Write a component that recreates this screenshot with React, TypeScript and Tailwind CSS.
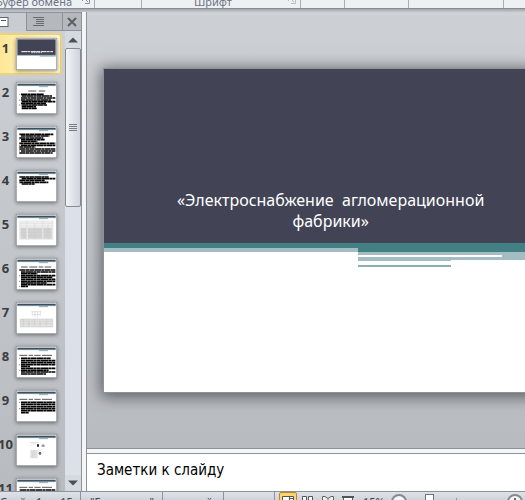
type Line = [x1: number, x2: number, y: number];

interface Slide {
  id: number;
  kind?: "title" | "table" | "diagram" | "photos";
  heading?: Line[];
  lines?: Line[];
}

const HEADING: Line[] = [
  [10, 34, 28],
  [38, 51, 28],
  [55, 74, 28],
  [78, 108, 28],
];

const SLIDES: Slide[] = [
  { id: 1, kind: "title" },
  {
    id: 2,
    heading: [[37, 61, 27], [68, 88, 27]],
    lines: [
      [15, 84, 37], [17, 108, 42], [15, 118, 48], [15, 105, 54],
      [17, 118, 59], [15, 90, 64], [17, 94, 69], [17, 60, 74], [17, 62, 79],
    ],
  },
  {
    id: 3,
    lines: [
      [10, 112, 25], [15, 100, 30], [10, 82, 36], [15, 86, 41], [15, 64, 46],
      [10, 118, 52], [15, 118, 58], [10, 58, 63], [10, 118, 69], [15, 118, 75], [10, 110, 81],
    ],
  },
  {
    id: 4,
    lines: [[10, 98, 21], [17, 118, 26], [10, 86, 31], [10, 97, 37], [17, 56, 42]],
  },
  { id: 5, kind: "table" },
  {
    id: 6,
    heading: [[15, 35, 27], [40, 64, 27], [68, 82, 27], [86, 106, 27]],
    lines: [
      [10, 118, 36], [15, 118, 42], [15, 64, 47], [15, 118, 53], [15, 110, 58],
      [15, 118, 64], [15, 118, 70], [15, 92, 75], [15, 118, 80], [15, 36, 85],
    ],
  },
  { id: 7, kind: "diagram" },
  {
    id: 8,
    heading: HEADING,
    lines: [
      [15, 104, 37], [15, 118, 44], [15, 118, 50], [15, 118, 56], [15, 42, 61],
      [15, 118, 67], [15, 98, 73], [15, 118, 78], [15, 90, 84],
    ],
  },
  {
    id: 9,
    heading: HEADING,
    lines: [
      [15, 118, 37], [15, 118, 43], [15, 118, 50], [15, 118, 56], [15, 118, 62], [15, 38, 68],
    ],
  },
  { id: 10, kind: "photos" },
  { id: 11, heading: HEADING, lines: [[12, 118, 36], [15, 118, 42]] },
];

function SlideArt({ slide }: { slide: Slide }) {
  return (
    <svg viewBox="0 0 123 96" className="block h-8 w-[41px]" aria-hidden="true">
      <rect x="1" y="1" width="121" height="94" fill="#fff" stroke="#8b8f94" strokeWidth="2" />
      {slide.kind === "title" ? (
        <>
          <rect x="4" y="4" width="115" height="48" fill="#424456" />
          <path d="M16 41H111" stroke="#fff" strokeWidth="3" strokeDasharray="17 1 9 2" />
          <path d="M46 44H78" stroke="#fff" strokeWidth="2" strokeDasharray="5 2" />
          <path d="M4 52H119" stroke="#a3bdc2" strokeWidth="2" />
          <path d="M71 54H119" stroke="#8199a5" strokeWidth="3" />
        </>
      ) : (
        <>
          <rect x="4" y="5" width="115" height="6" fill="#3d4e5d" />
          <path d="M4 11H119" stroke="#739099" strokeWidth="2" />
          <path d="M69 14H96" stroke="#8faeb4" strokeWidth="3" />
        </>
      )}
      {slide.heading?.map(([x1, x2, y]) => (
        <path key={x1} d={`M${x1} ${y}H${x2}`} stroke="#000" strokeWidth="2" />
      ))}
      {slide.lines?.map(([x1, x2, y], i) => (
        <g key={y}>
          <path
            d={`M${x1} ${y}H${x2}`}
            stroke="#000"
            strokeWidth="5"
            strokeDasharray={i % 2 ? "13 1 22 1 8 1" : "19 1 9 1 16 1"}
          />
          {i % 3 === 0 && <circle cx="11" cy={y} r="2" fill="#b87a4b" />}
        </g>
      ))}
      {slide.kind === "table" && (
        <g stroke="#c8c8c8" strokeWidth="1">
          <path d="M11 21H111V76H11Z" fill="#f1f1f1" />
          <path d="M14 41H31V74H14ZM36 41H78V74H36ZM82 41H107V74H82Z" fill="#d2d2d2" stroke="none" />
          <path d="M11 28H111M11 36H111M11 46H111M11 55H111M11 65H111M33 21V76M56 28V76M80 21V76M96 28V76" />
        </g>
      )}
      {slide.kind === "diagram" && (
        <g stroke="#aaa" strokeWidth="1" fill="none">
          <path d="M46 29H75M49 29V43M57 29V47M65 29V47M73 29V43M51 38H72" />
          <path d="M13 51H110V75H13Z" fill="#e3e3e3" />
          <path d="M13 58H110M13 65H110M22 51V75M38 58V75M55 51V75M72 58V75M91 51V75" strokeDasharray="6 2" />
        </g>
      )}
      {slide.kind === "photos" && (
        <g>
          <path d="M41 24H67V27H41ZM43 48H65V73H43Z" fill="#e2e2e2" />
          <path d="M46 30H60M49 53V71M55 50V67" stroke="#c4c4c4" strokeWidth="2" strokeDasharray="3 2" />
          <path d="M63 31H69V38H63ZM80 31H82V38H80ZM70 54H74V62H70Z" fill="#222" />
          <path d="M76 33H87V38H76ZM66 56H77V60H66Z" fill="#777" fillOpacity=".5" />
        </g>
      )}
    </svg>
  );
}

function Launcher() {
  return (
    <svg viewBox="0 0 8 8" className="h-2 w-2" fill="none" stroke="#8a919a" aria-hidden="true">
      <path d="M.5 5V.5H6M3 3L6 6M7.5 3V7.5H3" />
    </svg>
  );
}

function Ribbon() {
  return (
    <header className="flex h-[9px] shrink-0 overflow-hidden border-b border-[#878c94] bg-[#eef1f4] text-[11px] leading-4 text-[#6d7385]">
      <div className="flex w-[95px] shrink-0 items-end justify-end gap-[10px] border-r border-[#a9aeb5] pr-1">
        <span className="-mb-[2px] whitespace-nowrap">Буфер обмена</span>
        <button type="button" aria-label="Параметры буфера обмена" className="mb-1">
          <Launcher />
        </button>
      </div>
      <div className="w-[47px] shrink-0 border-r border-[#a9aeb5]" />
      <div className="flex w-[159px] shrink-0 items-end justify-end gap-14 border-r border-[#a9aeb5] pr-1">
        <span className="-mb-[2px]">Шрифт</span>
        <button type="button" aria-label="Параметры шрифта" className="mb-1 opacity-50">
          <Launcher />
        </button>
      </div>
      <div className="w-11 shrink-0 border-r border-[#a9aeb5]" />
      <div className="w-16 shrink-0 border-r border-[#a9aeb5]" />
      <div className="w-[95px] shrink-0 border-r border-[#a9aeb5]" />
    </header>
  );
}

function PaneTabs() {
  return (
    <div className="flex h-[19px] shrink-0 bg-[#c9ccd0]">
      <button type="button" aria-label="Слайды" className="flex w-[26px] items-center border-t border-[#93979d]">
        <svg viewBox="0 0 26 16" className="h-4 w-[26px]" aria-hidden="true">
          <rect x="-4" y="3.5" width="12" height="9" fill="#fff" stroke="#5f646b" />
          <path d="M1 6.5H6" stroke="#555" />
        </svg>
      </button>
      <button
        type="button"
        aria-label="Структура"
        className="flex w-9 items-center justify-center border border-r-0 border-[#8d9298] bg-[#b5b9be] pr-3"
      >
        <svg viewBox="0 0 12 10" className="h-[10px] w-3" stroke="#666b72" aria-hidden="true">
          <path d="M0 .5H11M3 2.5H11M3 4.5H11M3 6.5H11M0 8.5H11" />
        </svg>
      </button>
      <button
        type="button"
        aria-label="Закрыть"
        className="flex flex-1 items-center justify-center border border-r-0 border-[#8d9298] bg-[#b5b9be]"
      >
        <svg viewBox="0 0 10 10" className="h-[10px] w-[10px]" stroke="#5b5f66" strokeWidth="2" aria-hidden="true">
          <path d="M1 1L9 9M9 1L1 9" />
        </svg>
      </button>
    </div>
  );
}

function Thumbnails() {
  return (
    <ol className="min-w-0 flex-1 overflow-hidden pt-[2px]">
      {SLIDES.map((slide) => (
        <li key={slide.id} className="h-11">
          <button
            type="button"
            className={
              slide.id === 1
                ? "flex h-[42px] w-[62px] items-start rounded-r border-2 border-l-0 border-[#ecd27b] bg-linear-to-r from-[#fde796] to-[#fff9dd] pt-[3px]"
                : "flex h-[42px] w-[62px] items-start pt-[5px]"
            }
          >
            <span className="flex w-4 shrink-0 justify-center pt-[2px] pr-[5px] text-[13px] leading-4 font-bold text-[#3b3d40]">
              {slide.id}
            </span>
            <span className="shadow-[0_1px_4px_rgba(0,0,0,0.45)]">
              <SlideArt slide={slide} />
            </span>
          </button>
        </li>
      ))}
    </ol>
  );
}

function ScrollBar() {
  return (
    <div className="flex w-4 shrink-0 flex-col bg-[#dce0e8]">
      <button type="button" aria-label="Вверх" className="flex h-[17px] items-center justify-center bg-[#d5dae0]">
        <svg viewBox="0 0 10 6" className="h-[6px] w-[10px]" fill="#4c5056" aria-hidden="true">
          <path d="M0 5.5L5 .5L10 5.5Z" />
        </svg>
      </button>
      <div className="flex h-[159px] items-center justify-center rounded-xs border border-[#858a93] bg-linear-to-r from-[#f2f4f7] to-[#cfd3dc]">
        <svg viewBox="0 0 8 8" className="h-2 w-2" stroke="#777c84" aria-hidden="true">
          <path d="M0 .5H8M0 2.5H8M0 4.5H8M0 6.5H8" />
        </svg>
      </div>
      <button type="button" aria-label="Вниз" className="mt-auto flex h-4 items-center justify-center bg-[#d5dae0]">
        <svg viewBox="0 0 10 6" className="h-[6px] w-[10px]" fill="#4c5056" aria-hidden="true">
          <path d="M0 .5L5 5.5L10 .5Z" />
        </svg>
      </button>
    </div>
  );
}

function SlideView() {
  return (
    <div className="min-h-0 flex-1 overflow-hidden bg-linear-to-b from-[#cdd0d4] to-[#b8bbc0] pt-14 pl-4">
      <article className="flex aspect-[4/3] h-[325px] flex-col border border-[#8e9297] bg-white shadow-[0_2px_14px_2px_rgba(60,64,70,0.75)]">
        <div className="flex h-[174px] flex-col justify-end bg-[#424456] pr-8 pb-[11px] pl-[54px]">
          <h1 className="text-center text-base leading-[21px] whitespace-pre text-white">
            {"«Электроснабжение  агломерационной\nфабрики»"}
          </h1>
        </div>
        <div className="flex">
          <div className="h-[9px] w-[254px] border-b-4 border-[#a3bdc2] bg-[#438086]" />
          <div className="flex-1">
            <div className="h-[9px] bg-[#438086]" />
            <div className="h-2 bg-[#a3bdc2] pt-[3px]">
              <div className="h-[2px] w-36 bg-white" />
            </div>
            <div className="h-[7px] w-[93px] border-t border-b-2 border-t-[#a3bdc2] border-b-[#8caeb3]" />
          </div>
        </div>
      </article>
    </div>
  );
}

function StatusBar() {
  return (
    <footer className="flex h-2 shrink-0 items-start overflow-hidden bg-linear-to-b from-[#dfe3e9] to-[#cfd4db] text-[11px] leading-4 whitespace-nowrap text-[#3f434a]">
      <span className="w-[81px] border-r border-[#8f949c] pt-[2px]">Слайд 1 из 15</span>
      <span className="w-[82px] border-r border-[#8f949c] pt-[2px] pl-[9px]">"Городская"</span>
      <span className="w-[61px] border-r border-[#8f949c] pt-[2px] pl-2">русский</span>
      <span className="h-4 w-[51px] border-r border-[#8f949c]" />
      <div className="flex gap-[2px] pl-1">
        <button
          type="button"
          aria-label="Обычный"
          className="flex h-5 w-[18px] justify-center rounded-xs border border-[#b3863a] bg-[#fbd66c] pt-[3px]"
        >
          <svg viewBox="0 0 12 10" className="h-[10px] w-3" fill="#fff" stroke="#555" aria-hidden="true">
            <path d="M.5 .5H11.5V9.5H.5ZM7.5 .5V9.5M8 2.5H11" />
          </svg>
        </button>
        <button type="button" aria-label="Сортировщик слайдов" className="flex h-5 w-[18px] justify-center pt-1">
          <svg viewBox="0 0 12 10" className="h-[10px] w-3" fill="#fff" stroke="#555" aria-hidden="true">
            <path d="M.5 .5H4.5V4.5H.5ZM6.5 .5H10.5V4.5H6.5Z" />
          </svg>
        </button>
        <button type="button" aria-label="Режим чтения" className="flex h-5 w-[18px] justify-center pt-1">
          <svg viewBox="0 0 12 10" className="h-[10px] w-3" fill="#eee" stroke="#666" aria-hidden="true">
            <path d="M.5 .5H3L6 2.5L9 .5H11.5V9.5H.5ZM6 2.5V9.5" />
          </svg>
        </button>
        <button type="button" aria-label="Показ слайдов" className="flex h-5 w-[18px] justify-center pt-1">
          <svg viewBox="0 0 12 10" className="h-[10px] w-3" fill="#fff" stroke="#555" aria-hidden="true">
            <path d="M0 1H12" strokeWidth="2" />
            <path d="M1.5 2V7.5H10.5V2" />
          </svg>
        </button>
      </div>
      <span className="ml-[6px] w-7 pt-[2px]">15%</span>
      <div className="flex min-w-0 flex-1 justify-between pt-[2px] pr-[2px]">
        <button type="button" aria-label="Уменьшить" className="h-4 w-4 rounded-full border-2 border-[#858a92] bg-[#f5f6f8]" />
        <span className="mr-auto ml-[18px] h-4 w-[9px] border border-[#6f747c] bg-white" />
        <span className="mt-1 mr-[50px] h-4 w-px bg-[#8f949c]" />
        <button
          type="button"
          aria-label="Увеличить"
          className="flex h-4 w-4 justify-center rounded-full border-2 border-[#858a92] bg-[#f5f6f8]"
        >
          <span className="mt-[2px] h-2 w-[2px] bg-[#5f646c]" />
        </button>
      </div>
    </footer>
  );
}

export default function App() {
  return (
    <div className="flex h-screen flex-col overflow-hidden bg-[#c9ccd0] font-['Noto_Sans','Open_Sans',sans-serif]">
      <Ribbon />
      <div className="h-[3px] shrink-0 bg-linear-to-b from-[#a3a7ac] to-[#c4c7cb]" />
      <main className="flex min-h-0 flex-1">
        <aside className="flex w-[82px] shrink-0 flex-col border-r border-[#8d9298] bg-linear-to-b from-[#cdd0d4] to-[#b8bbc0]">
          <PaneTabs />
          <div className="flex min-h-0 flex-1">
            <Thumbnails />
            <ScrollBar />
          </div>
        </aside>
        <div className="w-1 shrink-0 bg-[#f3f5f7]" />
        <section className="flex min-w-0 flex-1 flex-col border-l border-[#8d9298]">
          <SlideView />
          <div className="h-[6px] shrink-0 border-y border-[#8d9298] bg-[#f3f5f7]" />
          <label className="h-[37px] shrink-0 bg-white">
            <span className="sr-only">Заметки</span>
            <input
              type="text"
              defaultValue="Заметки к слайду"
              className="block w-full bg-transparent px-[10px] pt-1 font-['DejaVu_Sans_Condensed','DejaVu_Sans',sans-serif] text-[15px] leading-6 text-black outline-none"
            />
          </label>
        </section>
      </main>
      <div className="h-px shrink-0 bg-[#8d9298]" />
      <StatusBar />
    </div>
  );
}
